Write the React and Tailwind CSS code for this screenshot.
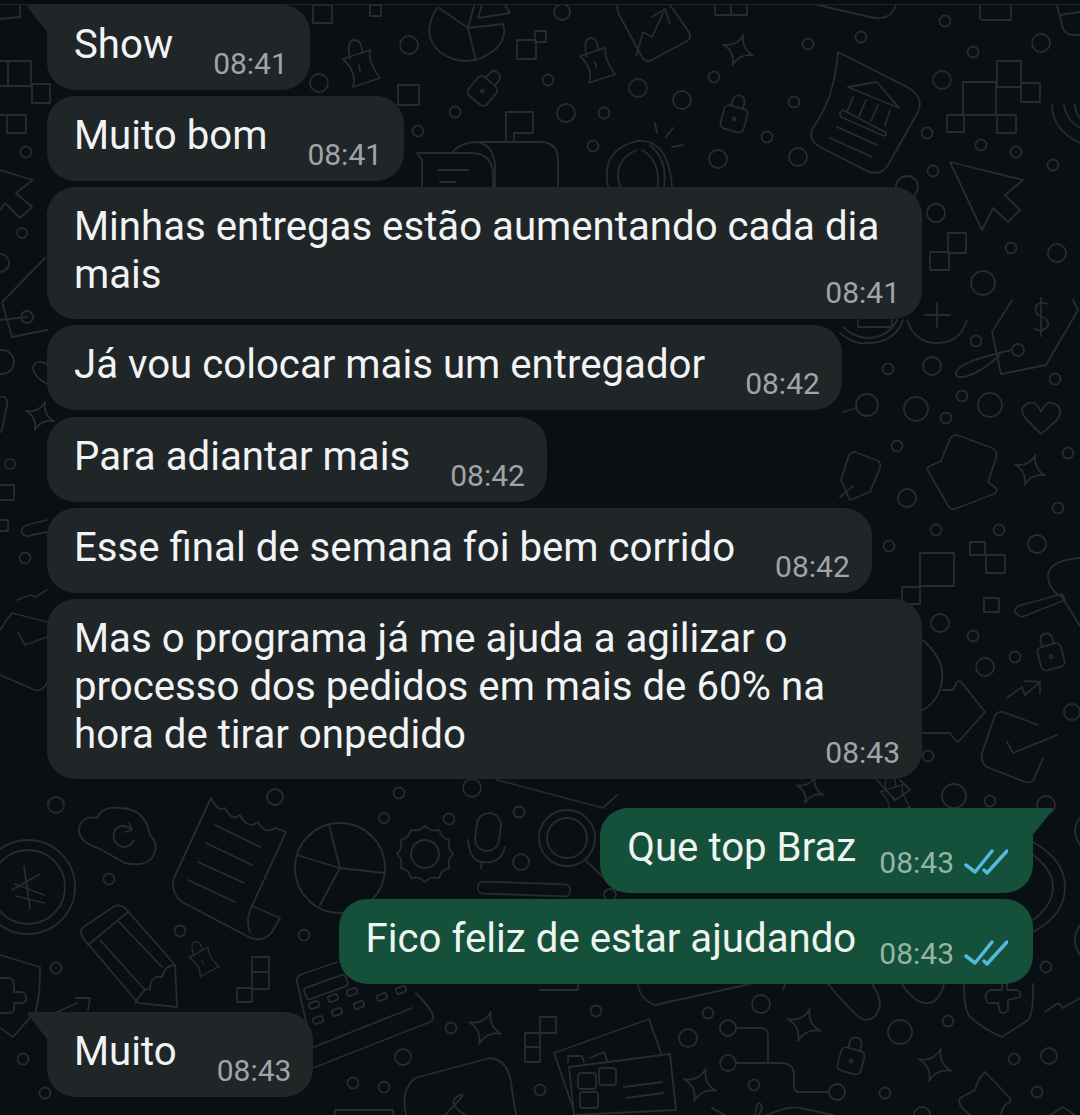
import React from "react";

const circles = [
  [409,45,9],[319,83,9],[455,112,5.5],[418,131,5.5],[548,80,5.5],[566,113,9],[604,113,5.5],[638,88,9],[682,100,9],[714,77,5.5],[593,146,5.5],[562,12,8],
  [945,21,5.5],[861,37,5.5],[808,44,5.5],[1041,43,9],[973,52,5.5],[942,80,9],[794,102,5.5],[927,133,5.5],[767,137,5.5],[981,145,5.5],[1016,152,5.5],[718,159,9],[798,157,9],[1053,165,5.5],[933,171,5.5],[907,187,11],[936,213,9],[1011,248,5.5],[1057,253,9],[983,283,12],
  [976,341,5.5],[1018,350,6],[888,369,5.5],[932,366,9],[1055,379,5.5],[962,396,5.5],[916,409,12],[946,418,5.5],[990,405,12],[867,405,11],[897,446,5.5],[1068,453,5.5],[907,498,9],[1058,508,5.5],[936,530,5.5],[999,530,5.5],[889,546,5.5],[1037,544,9],
  [940,623,9],[973,636,5.5],[1015,657,5.5],[985,667,9],[928,756,5.5],[954,796,12],[990,801,5.5],[1046,805,9],[1072,712,8],
  [56,805,8],[275,797,8],[399,793,5.5],[384,818,5],[449,819,5.5],[519,812,5.5],[521,862,8],[109,879,5.5],[180,931,5.5],[304,935,5.5],[56,968,5.5],[23,1059,5.5],[45,1093,5.5],[451,1028,5.5],[403,1057,8],[353,1083,5.5],[384,1087,5.5],[540,1090,5.5],
  [596,1011,5.5],[708,1013,5.5],[761,1004,9],[688,1038,9],[728,1028,8],[728,1063,8],[837,1092,8],[885,1093,5.5],[754,1085,5.5],[948,1021,5.5],[900,1032,12],[1014,1059,5.5],[1049,1056,8],[1037,1092,5.5],[1046,967,5.5],
  [22,233,5],[10,464,5],[25,558,5.5],[26,152,5.5],[0,263,9],[2,362,12],[472,788,9],[610,895,6],[922,1115,8],[27,317,6],
];

const rects = [
  [8,61,23,25],[32,84,18,19],[7,115,19,18],[313,5,19,18],[370,5,11,11],[398,85,21,20],[517,40,19,19],[535,31,11,11],
  [997,61,24,26],[1021,83,19,19],[963,82,33,33],[947,115,17,17],[997,115,19,18],[948,233,18,20],[930,252,19,18],
  [920,553,34,33],[902,587,18,17],[970,542,15,13],[986,555,19,18],[984,598,15,14],
  [252,957,17,15],[252,972,17,17],[237,988,15,14],[525,1033,15,14],[525,1047,15,15],[540,1017,16,16],
];

const paths = [
  // top edge bits
  "M0 19 L20 17 L20 5","M0 61 H8 M0 86 H8 M0 115 H7",
  "M715 5 V15 H747 V5 M731 5 V15","M818 5 L870 17 Q890 22 896 5","M980 5 V17 Q980 20 985 20 H1011 V5","M1057 5 L1062 25 Q1064 36 1075 35 H1080 M1060 15 L1080 12",
  // pie
  "M437 8 Q420 35 440 52 Q465 70 492 52 Q508 40 503 24 L468 28 L476 61 M468 28 L439 8 M468 28 L474 6 M478 18 L510 13 L505 5 M482 5 L478 18",
  // chart card
  "M617 5 Q617 12 621 18 L642 57 Q646 63 652 60 L687 41 Q692 38 689 32 L670 5","M636 56 L643 32 L652 37 L663 13 M652 17 L665 9 L670 24",
  // flag and chat bubbles
  "M506 142 V112 H533 V133 H514 V142","M453 152 Q460 142 480 142 H540 Q558 142 558 160 V187","M417 153 H470 Q493 153 493 175 V187 M417 153 L422 160 V187 M438 170 H468 M440 182 H455 M478 142 Q493 145 495 165 V187",
  // lens
  "M608 187 Q600 150 637 141 Q668 138 672 187 M620 187 Q612 160 637 150 M642 150 Q660 160 658 187 M664 187 Q668 160 650 145 M655 123 L657 133 M673 128 L666 137 M683 145 L672 147",
  // bank document
  "M838 52 L905 86 Q925 96 918 112 L888 165 Q880 178 865 170 L820 147 Q805 138 815 125 Q835 95 838 52Z","M848 87 L877 82 L899 108Z M853 97 L847 112 M866 100 L859 116 M878 105 L871 121 M890 110 L885 126 M843 110 L885 132 Q888 135 884 136 L841 117 Q838 112 843 110Z M837 127 L877 145 M830 138 L872 157",
  // sound arcs, cursor
  "M1052 105 Q1052 130 1080 143 M1064 105 Q1066 120 1080 128 M1075 105 Q1075 112 1080 118","M950 162 L1023 180 L1005 195 L1020 210 L1008 222 L993 208 L982 230Z",
  // left cursor and misc
  "M0 170 L33 180 L16 193 L32 207 L20 218 L5 203 L0 210","M45 258 L2 302 L12 337 L47 330 M0 320 L27 317 M47 364 Q35 358 33 368 Q33 376 47 384","M0 397 Q8 395 7 405 L4 420 Q2 433 0 432","M0 485 H14 V500 H0 M0 520 H8 V531 H0","M47 520 L27 525 Q20 528 22 533 Q25 538 32 535 L47 532","M17 600 L30 595 L35 597 L47 590","M0 630 Q5 622 12 613 L47 622 M18 633 L25 645 L47 637 M0 675 L35 690 Q42 692 47 683",
  // plus circles
  "M907 320 Q915 343 937 343 Q960 343 967 320 M840 333 Q855 345 867 343 Q895 343 903 320 M843 327 Q855 338 867 338 Q888 338 897 320 M925 315 H950 M937 303 V327 M858 320 V327 H892 V320",
  // price tag
  "M1012 300 L992 332 L1001 374 L1046 365 L1078 310 L1073 300","M1012 350 C990 355 960 362 956 372 C954 382 975 378 1000 355","M1048 304 Q1040 301 1036 306 Q1034 314 1040 316 Q1050 319 1048 326 Q1042 334 1034 328 M1041 298 V336",
  // folder, heart, tag
  "M941 461 L949 441 Q952 433 960 436 L992 448 Q998 451 996 458 L988 482 L996 488 Q998 492 994 494 L955 509 Q951 510 949 507 L928 471 Q926 467 930 466Z","M1041 434 L1028 421 Q1018 411 1025 405 Q1035 398 1041 412 Q1047 398 1057 405 Q1064 411 1056 421Z","M855 452 L878 461 Q881 463 880 468 L870 492 L850 500 L841 480 L848 458 Q850 452 855 452 M853 486 L840 497","M843 412 L857 408",
  // cross and pill
  "M1080 558 Q1050 560 1048 575 Q1048 590 1062 597 M1018 606 L1062 594 L1065 600 L1022 617 Q1010 612 1018 606 M1062 597 L1080 626",
  // house arrow, trend, envelope
  "M923 640 Q945 660 942 680 Q940 700 923 710 M943 690 H953 L957 682 Q960 680 962 683 L985 712 L960 740 Q957 743 955 740 L950 733 H923","M1007 698 L1022 687 L1025 695 L1040 682 M1025 681 L1040 682 L1040 693","M1038 725 L1003 712 Q996 711 994 718 L982 753 Q980 762 987 767 L1025 782 Q1032 784 1035 777 L1043 758 M1007 742 L1013 753 L1057 735","M877 780 L895 800 L910 790 L900 780",
  // yen coin
  "M24 866 L30 908 M12 890 L40 874 M15 884 L44 895 M16 896 L44 903",
  // cloud
  "M125 863 L98 848 Q78 842 79 828 Q82 815 97 818 Q102 806 120 808 Q145 808 150 835 Q160 845 152 858 Q145 867 125 863Z","M131 829 Q122 822 115 830 Q110 842 122 847 Q130 848 134 840 M129 823 L132 830 L125 832",
  // receipt
  "M211 798 L174 878 Q170 892 182 902 L245 935 Q262 945 272 932 L280 918 L252 906 L286 832 M211 798 Q218 812 225 808 Q232 822 240 815 Q248 830 258 822 Q265 835 275 828 L286 832 M252 906 Q245 920 250 932","M215 825 L260 847 M206 843 L252 865 M198 862 L244 883 M188 880 L235 902",
  // pie 2
  "M340 868 L329 825 M340 868 L297 855 M340 868 L320 905 M340 868 L384 873",
  // mic
  "M468 840 Q470 862 483 862 Q500 865 505 847 M482 862 L481 868",
  // magnifier and lines
  "M585 860 L603 877","M497 780 L603 808 L617 795",
  // pencil
  "M113 907 Q120 903 126 909 L175 965 L177 1007 L138 1003 L83 938 Q78 930 85 926Z","M88 945 L128 912 M100 940 L145 990 M119 922 L162 967 M135 1003 Q146 985 150 990 Q150 975 162 977 Q165 965 175 965",
  // shield left
  "M0 955 L40 967 Q40 1000 35 1012 L13 1037 L0 1028","M0 978 H8 Q14 978 14 985 V992 H22 Q27 994 26 1000 Q24 1004 18 1003 H14 V1010 Q12 1014 6 1013 H0",
  "M57 1012 L77 1003 M76 998 L90 998 L88 1010",
  // keyboard
  "M337 962 L300 975 Q296 977 297 982 L312 1047 M416 993 Q428 1005 433 1015 Q434 1020 430 1022 L313 1068 M314 1047 L412 1008",
  // bottom bubble
  "M406 1115 Q400 1090 415 1078 L490 1058 Q510 1060 512 1090 L516 1115","M445 1115 Q470 1090 460 1095 Q445 1102 465 1115","M335 1115 V1110 H393 V1115",
  // QR cards
  "M573 1108 L554 1053 L649 1019 L661 1053","M569 1067 L670 1054 L676 1110 L574 1115 Z","M624 1087 L662 1082 M626 1098 L663 1093","M568 1062 V1056 H582 L584 1062 M590 1058 L604 1052 L607 1060",
  // connector
  "M736 1028 H760 Q768 1028 768 1035 V1063 M736 1063 H780 Q794 1063 794 1075 V1085 Q794 1092 800 1092 H829",
  // trend right, shield right, pin
  "M1045 1012 L1058 1003 L1063 1008 L1080 998","M964 984 Q964 1010 970 1017 Q985 1030 1002 1037 L1028 1020 Q1033 1015 1033 990 L1033 984","M990 990 H1002 V984 M1007 984 V990 H1017 Q1022 992 1020 997 L1008 1000 V1010 Q1004 1015 1000 1012 L998 1003 L988 1003 Q982 996 990 990",
  "M985 1072 L1010 1098 Q1012 1102 1005 1105 L1000 1115 M985 1072 Q978 1078 975 1090 L960 1098 Q958 1103 962 1108 L970 1115",
  // under outgoing bubble
  "M540 990 H578 V984","M638 984 Q640 1000 655 1005 L750 984","M783 990 L785 984","M828 984 Q850 1010 860 1018 Q875 1025 880 1005 Q880 995 872 984","M902 984 Q915 1005 930 1003 Q940 1000 944 984",
  "M712 1108 L725 1115","M755 1115 L757 1105 Q760 1100 762 1108 L759 1115","M767 1115 Q790 1105 800 1108 L833 1115","M1050 1115 L1063 1107 L1075 1115",
  // right arcs
  "M1033 842 Q1065 860 1065 887 Q1065 915 1033 932 M1033 855 Q1053 870 1053 887 Q1053 905 1033 920 M1080 818 Q1070 830 1080 845 M1080 925 Q1070 940 1080 955",
];

const stars = [[738,50,16,20],[1030,470,16,20],[485,1028,17,20],[700,1085,17,20],[804,1025,17,20],[935,1065,17,20],[40,416,15,20],[810,790,14,20]];
const bottles = [[361,63,0,1],[597,60,0,0.95],[203,958,-10,0.75],[895,795,0,0.8]];
const locks = [[485,88,40],[735,115,15],[1050,653,-15],[852,1057,15]];
const keys = [[314,1005],[333,998],[352,992],[382,997],[401,990],[318,1020],[337,1012],[359,1005]];
const qrSquares = [[578,1073,18,16],[599,1068,17,17],[580,1092,18,16]];

function gearPath(cx, cy, r) {
  let d = "";
  for (let i = 0; i < 36; i++) {
    const a = (i / 36) * Math.PI * 2;
    const rr = i % 3 === 0 ? r + 3 : r;
    d += `${i === 0 ? "M" : "L"}${(cx + rr * Math.cos(a)).toFixed(1)} ${(cy + rr * Math.sin(a)).toFixed(1)} `;
  }
  return d + "Z";
}

function Wallpaper() {
  return (
    <svg className="absolute inset-0" width="1080" height="1115" viewBox="0 0 1080 1115" fill="none" stroke="#282c2f" strokeWidth="1.8" strokeLinejoin="round" strokeLinecap="round">
      {circles.map(([x, y, r], i) => <circle key={i} cx={x} cy={y} r={r} />)}
      {rects.map(([x, y, w, h], i) => <rect key={i} x={x} y={y} width={w} height={h} />)}
      {paths.map((d, i) => <path key={i} d={d} />)}
      {stars.map(([x, y, s, rot], i) => (
        <path key={i} transform={`translate(${x} ${y}) rotate(${rot})`} d={`M0 ${-s} Q${s * 0.15} ${-s * 0.15} ${s} 0 Q${s * 0.15} ${s * 0.15} 0 ${s} Q${-s * 0.15} ${s * 0.15} ${-s} 0 Q${-s * 0.15} ${-s * 0.15} 0 ${-s}Z`} />
      ))}
      {bottles.map(([x, y, rot, sc], i) => (
        <g key={i} transform={`translate(${x} ${y}) rotate(${rot}) scale(${sc})`}>
          <path d="M-11 -4 Q-15 -23 -6 -23 Q1 -23 1 -10" />
          <path d="M-18 -4 L9 -13 Q7 -1 19 15 L-8 24 Q-4 9 -18 -4Z" />
          <path d="M-2 2 L-1 8" />
        </g>
      ))}
      {locks.map(([x, y, rot], i) => (
        <g key={i} transform={`translate(${x} ${y}) rotate(${rot})`}>
          <rect x="-12" y="-8" width="24" height="24" rx="5" />
          <path d="M-6 -8 V-13 Q-6 -20 0 -20 Q6 -20 6 -13 V-8" />
          <circle cx="0" cy="4" r="1.5" />
        </g>
      ))}
      {keys.map(([x, y], i) => <rect key={i} x={x - 5} y={y - 3} width="10" height="6" rx="2" transform={`rotate(-20 ${x} ${y})`} />)}
      {qrSquares.map(([x, y, w, h], i) => <rect key={i} x={x} y={y} width={w} height={h} rx="3" />)}
      <rect x="304" y="981" width="44" height="12" rx="3" transform="rotate(-20 326 987)" />
      <rect x="478" y="883" width="92" height="12" rx="5" transform="rotate(2 524 889)" />
      <rect x="476" y="813" width="24" height="38" rx="12" transform="rotate(8 488 832)" />
      <circle cx="28" cy="887" r="47" />
      <circle cx="28" cy="887" r="37" />
      <circle cx="340" cy="868" r="45" />
      <path d={gearPath(425, 854, 25)} />
      <circle cx="425" cy="854" r="14" />
      <circle cx="567" cy="838" r="28" />
      <circle cx="567" cy="838" r="20" />
    </svg>
  );
}

function Tail({ side, color }) {
  if (side === "left") {
    return (
      <svg className="absolute left-[-21px] top-0" width="22" height="30" viewBox="0 0 22 30">
        <path d="M22 0 H3 Q0 0 2 3 L22 28 Z" fill={color} />
      </svg>
    );
  }
  return (
    <svg className="absolute right-[-21px] top-0" width="22" height="30" viewBox="0 0 22 30">
      <path d="M0 0 H19 Q22 0 20 3 L0 28 Z" fill={color} />
    </svg>
  );
}

function DoubleCheck() {
  return (
    <svg width="44" height="26" viewBox="0 0 44 26" fill="none" stroke="#54b9de" strokeWidth="3.5" strokeLinecap="round" strokeLinejoin="round">
      <path d="M2 16 L11 23 L28 2" />
      <path d="M20 21 L23 24 L43 2" />
    </svg>
  );
}

function Incoming({ text, time, tail, className = "" }) {
  return (
    <div className={`relative flex w-fit items-end gap-[40px] rounded-[28px] bg-[#202528] pb-[9px] pl-[27px] pr-[22px] pt-[16px] ${tail ? "rounded-tl-none" : ""} ${className}`}>
      {tail && <Tail side="left" color="#202528" />}
      <span className="mb-[12px] text-[40.2px] leading-[48px] text-[#f1f3f4]">{text}</span>
      <span className="text-[30px] leading-[34px] text-[#a0a4a6]">{time}</span>
    </div>
  );
}

function IncomingLong({ lines, time }) {
  return (
    <div className="flex w-[875px] flex-col rounded-[28px] bg-[#202528] pb-[9px] pl-[27px] pr-[22px] pt-[16px]">
      {lines.map((line) => (
        <span key={line} className="whitespace-nowrap text-[40.2px] leading-[48px] text-[#f1f3f4]">{line}</span>
      ))}
      <span className="mt-[-23px] self-end text-[30px] leading-[34px] text-[#a0a4a6]">{time}</span>
    </div>
  );
}

function Outgoing({ text, time, tail, className = "" }) {
  return (
    <div className={`relative flex w-fit items-end self-end rounded-[28px] bg-[#15503a] pb-[9px] pl-[27px] pr-[25px] pt-[16px] ${tail ? "rounded-tr-none" : ""} ${className}`}>
      {tail && <Tail side="right" color="#15503a" />}
      <span className="mb-[12px] text-[40.2px] leading-[48px] text-[#eef5f1]">{text}</span>
      <span className="mb-[4px] ml-[23px] text-[30px] leading-[34px] text-[#93b5a6]">{time}</span>
      <span className="mb-[9px] ml-[10px] flex"><DoubleCheck /></span>
    </div>
  );
}

export default function App() {
  return (
    <div className="relative h-[1115px] w-[1080px] overflow-hidden bg-[#0a0f13] font-['Roboto',sans-serif]">
      <Wallpaper />
      <div className="absolute inset-x-0 top-0 h-[5px] border-b border-[#202427] bg-[#0a0d0f]" />
      <div className="relative flex flex-col px-[47px] pt-[5px]">
        <Incoming text="Show" time="08:41" tail />
        <Incoming text="Muito bom" time="08:41" className="mt-[6px]" />
        <div className="mt-[6px]">
          <IncomingLong lines={["Minhas entregas estão aumentando cada dia", "mais"]} time="08:41" />
        </div>
        <Incoming text="Já vou colocar mais um entregador" time="08:42" className="mt-[6px]" />
        <Incoming text="Para adiantar mais" time="08:42" className="mt-[7px]" />
        <Incoming text="Esse final de semana foi bem corrido" time="08:42" className="mt-[6px]" />
        <div className="mt-[6px]">
          <IncomingLong lines={["Mas o programa já me ajuda a agilizar o", "processo dos pedidos em mais de 60% na", "hora de tirar onpedido"]} time="08:43" />
        </div>
        <Outgoing text="Que top Braz" time="08:43" tail className="mt-[29px]" />
        <Outgoing text="Fico feliz de estar ajudando" time="08:43" className="mt-[6px]" />
        <Incoming text="Muito" time="08:43" tail className="mt-[28px]" />
      </div>
    </div>
  );
}
